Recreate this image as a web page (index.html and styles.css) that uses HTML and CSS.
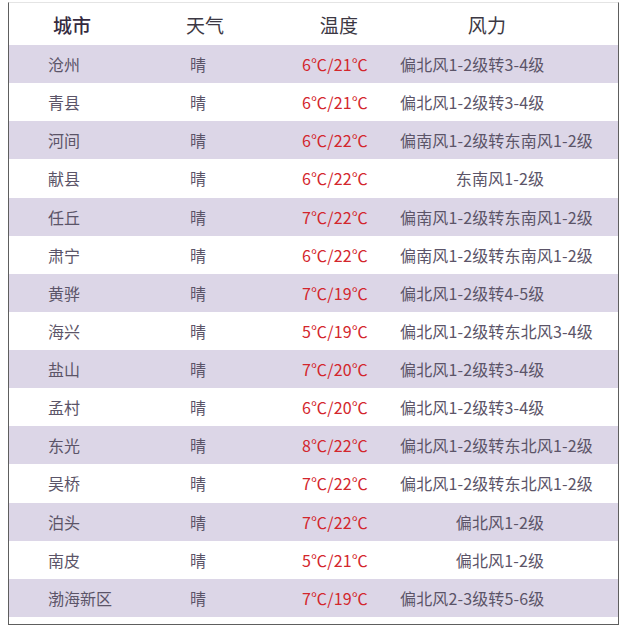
FILE: index.html
```html
<!DOCTYPE html>
<html lang="zh">
<head>
<meta charset="utf-8">
<link rel="stylesheet" href="styles.css">
</head>
<body>
<div class="table">
  <div class="row head">
    <div class="c1 h1">城市</div>
    <div class="c2 h2">天气</div>
    <div class="c3 h3">温度</div>
    <div class="c4 h4">风力</div>
  </div>
  <div class="row alt"><div class="c1">沧州</div><div class="c2">晴</div><div class="c3">6℃/21℃</div><div class="c4">偏北风1-2级转3-4级</div></div>
  <div class="row"><div class="c1">青县</div><div class="c2">晴</div><div class="c3">6℃/21℃</div><div class="c4">偏北风1-2级转3-4级</div></div>
  <div class="row alt"><div class="c1">河间</div><div class="c2">晴</div><div class="c3">6℃/22℃</div><div class="c4">偏南风1-2级转东南风1-2级</div></div>
  <div class="row"><div class="c1">献县</div><div class="c2">晴</div><div class="c3">6℃/22℃</div><div class="c4 mid">东南风1-2级</div></div>
  <div class="row alt"><div class="c1">任丘</div><div class="c2">晴</div><div class="c3">7℃/22℃</div><div class="c4">偏南风1-2级转东南风1-2级</div></div>
  <div class="row"><div class="c1">肃宁</div><div class="c2">晴</div><div class="c3">6℃/22℃</div><div class="c4">偏南风1-2级转东南风1-2级</div></div>
  <div class="row alt"><div class="c1">黄骅</div><div class="c2">晴</div><div class="c3">7℃/19℃</div><div class="c4">偏北风1-2级转4-5级</div></div>
  <div class="row"><div class="c1">海兴</div><div class="c2">晴</div><div class="c3">5℃/19℃</div><div class="c4">偏北风1-2级转东北风3-4级</div></div>
  <div class="row alt"><div class="c1">盐山</div><div class="c2">晴</div><div class="c3">7℃/20℃</div><div class="c4">偏北风1-2级转3-4级</div></div>
  <div class="row"><div class="c1">孟村</div><div class="c2">晴</div><div class="c3">6℃/20℃</div><div class="c4">偏北风1-2级转3-4级</div></div>
  <div class="row alt"><div class="c1">东光</div><div class="c2">晴</div><div class="c3">8℃/22℃</div><div class="c4">偏北风1-2级转东北风1-2级</div></div>
  <div class="row"><div class="c1">吴桥</div><div class="c2">晴</div><div class="c3">7℃/22℃</div><div class="c4">偏北风1-2级转东北风1-2级</div></div>
  <div class="row alt"><div class="c1">泊头</div><div class="c2">晴</div><div class="c3">7℃/22℃</div><div class="c4 mid">偏北风1-2级</div></div>
  <div class="row"><div class="c1">南皮</div><div class="c2">晴</div><div class="c3">5℃/21℃</div><div class="c4 mid">偏北风1-2级</div></div>
  <div class="row alt"><div class="c1">渤海新区</div><div class="c2">晴</div><div class="c3">7℃/19℃</div><div class="c4">偏北风2-3级转5-6级</div></div>
</div>
</body>
</html>
```

FILE: styles.css
```css
html, body {
  margin: 0;
  padding: 0;
  background: #ffffff;
}
body {
  padding: 2px 0 0 8px;
  font-family: "Noto Sans CJK SC", "Noto Sans", sans-serif;
  font-size: 16px;
  color: #5b5468;
}
.table {
  width: 611px;
  height: 623px;
  border: 1px solid #5e5e5e;
  border-top-color: #e4e4e4;
  box-sizing: border-box;
  background: #fff;
}
.row {
  display: flex;
  align-items: center;
  height: 38.13px;
  line-height: 1;
}
.row.alt {
  background: #dcd6e7;
}
.row.head {
  height: 42px;
  font-size: 19px;
  color: #3c3843;
}
.c1 {
  width: 140px;
  padding-left: 39px;
  box-sizing: border-box;
}
.c2 {
  width: 131px;
  padding-left: 41px;
  box-sizing: border-box;
}
.c3 {
  width: 110px;
  text-align: center;
  color: #d3262c;
  letter-spacing: 0.2px;
}
.c4 {
  flex: 1;
  padding-left: 10px;
  padding-right: 18px;
  box-sizing: border-box;
  letter-spacing: 0.15px;
}
.c4.mid {
  text-align: center;
}
.h1 {
  padding-left: 44px;
  font-weight: 500;
  color: #352a40;
}
.h2 {
  padding-left: 37px;
}
.h3 {
  color: #3c3843;
  padding-left: 4px;
}
.h4 {
  text-align: center;
  padding-right: 48px;
}
```
